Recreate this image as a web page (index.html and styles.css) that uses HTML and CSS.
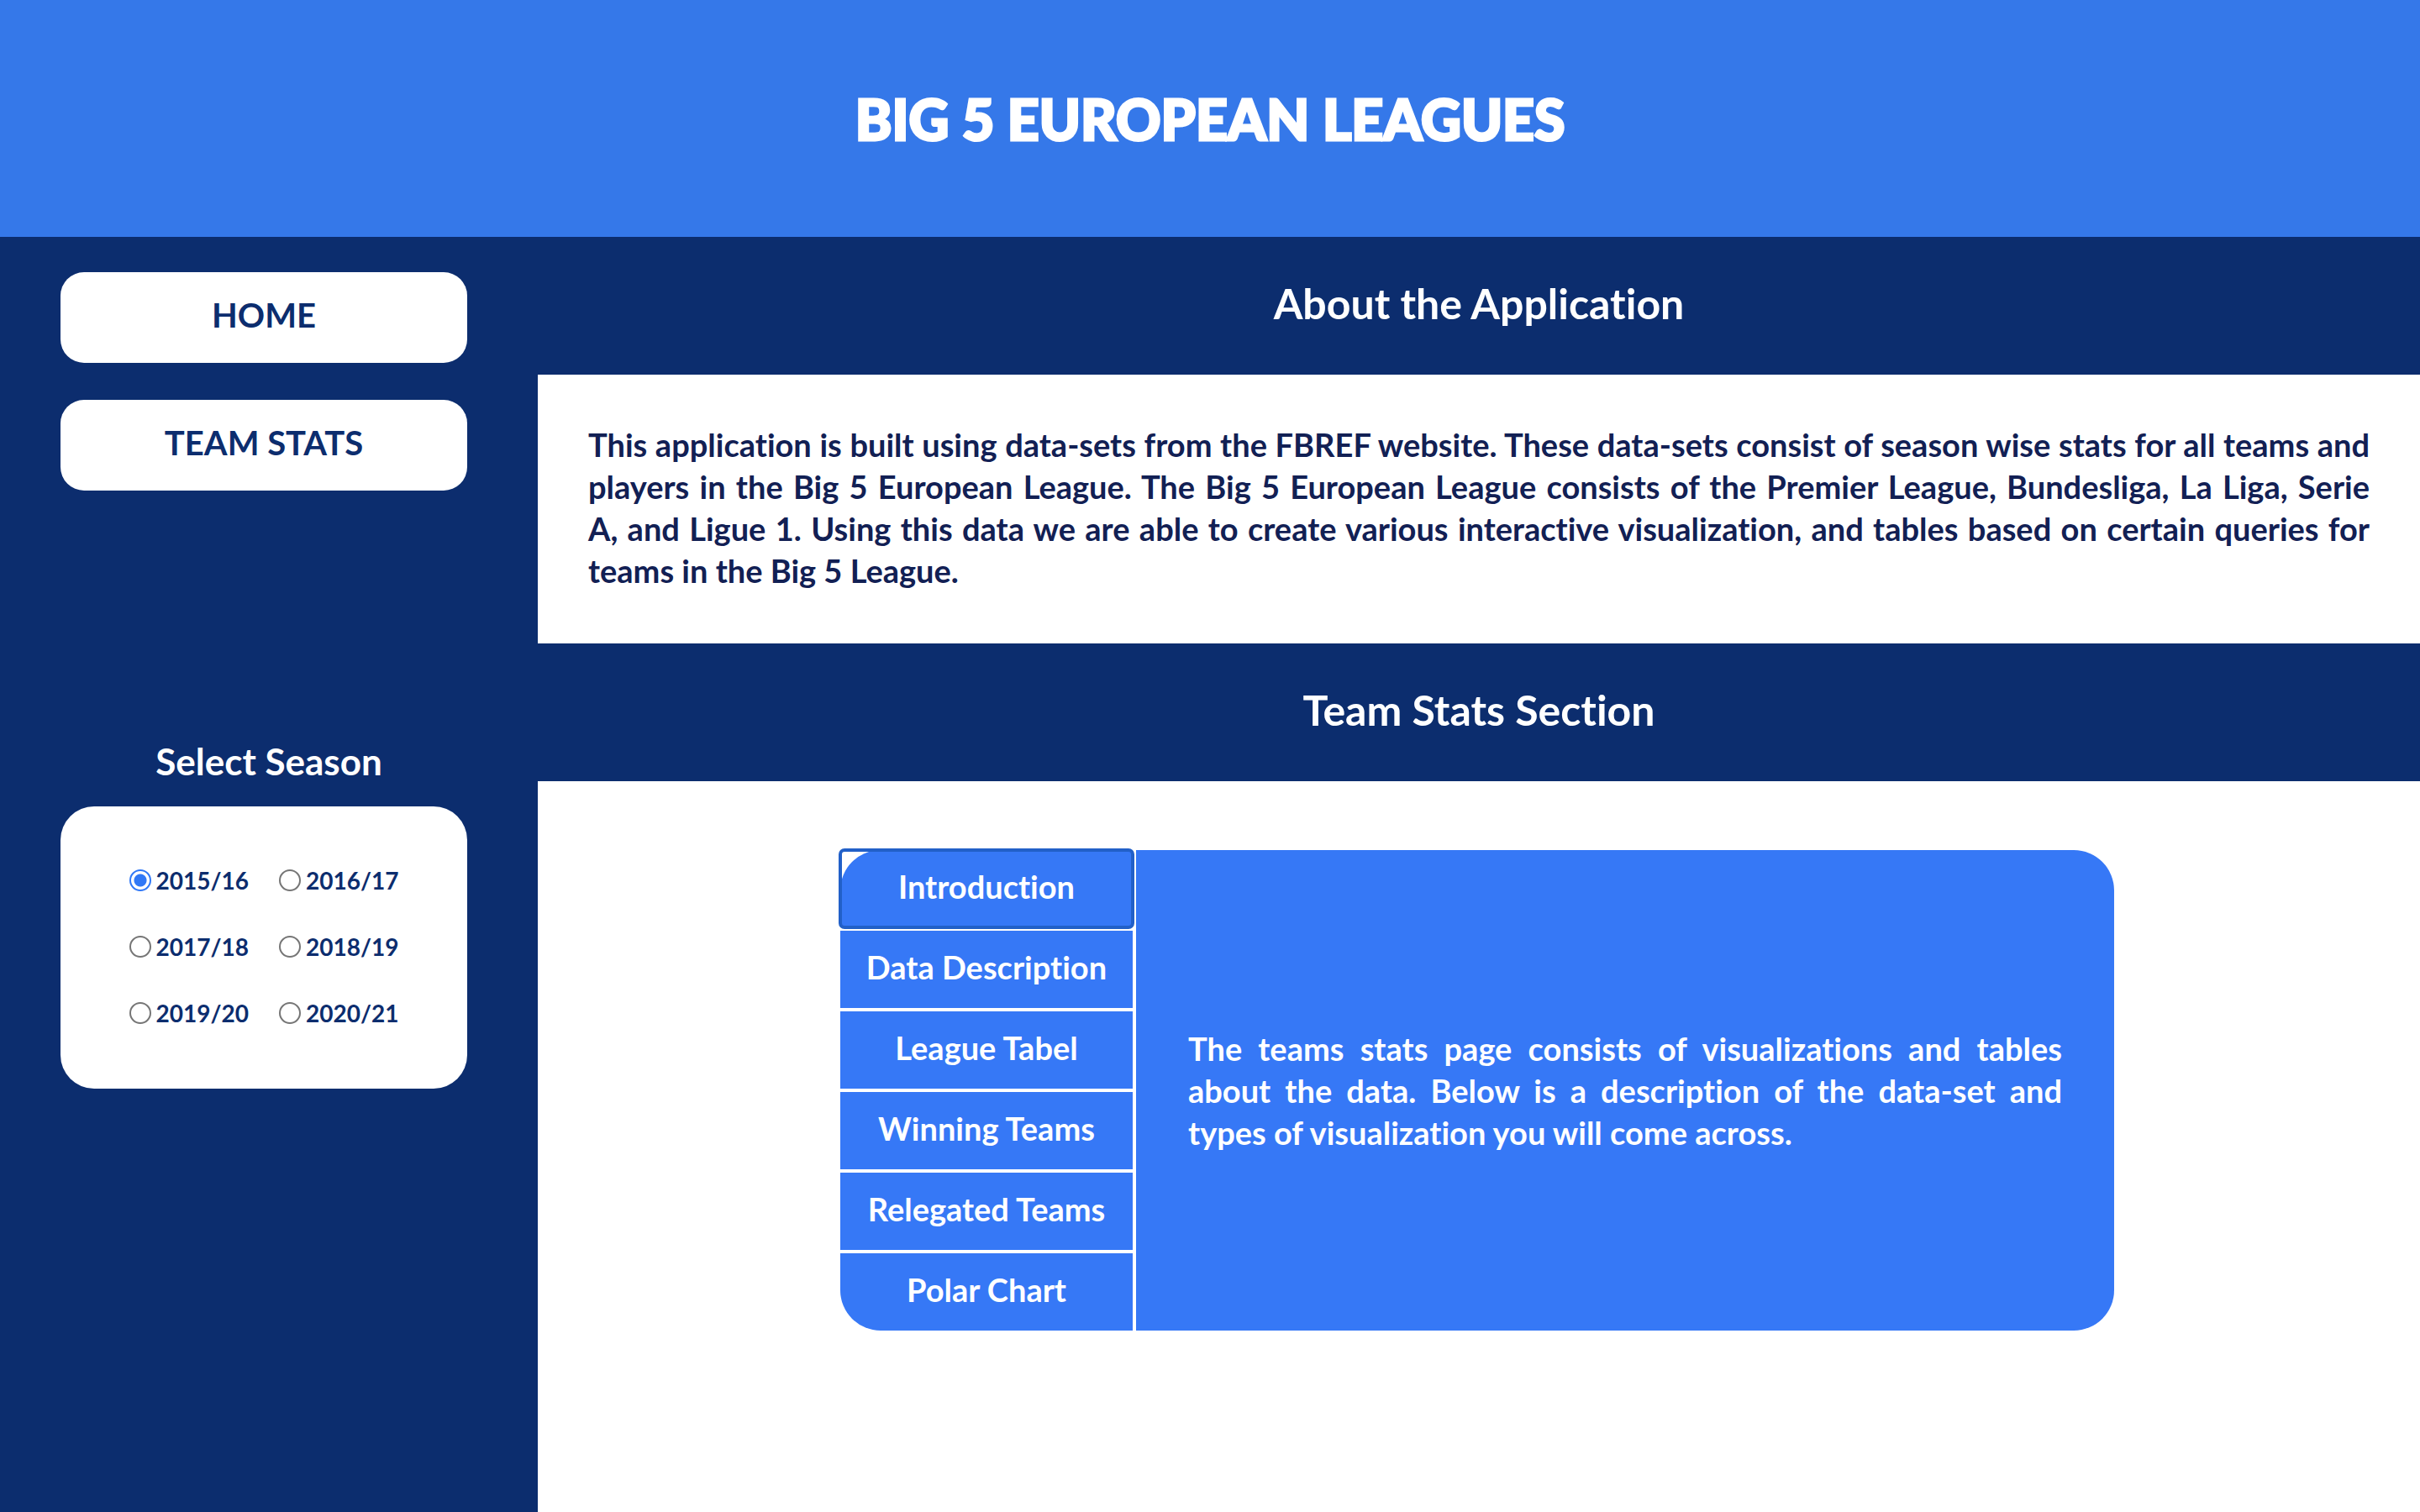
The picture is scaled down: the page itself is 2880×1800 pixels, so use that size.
FILE: index.html
```html
<!DOCTYPE html>
<html lang="en">
<head>
<meta charset="utf-8">
<meta name="viewport" content="width=device-width, initial-scale=1">
<title>Big 5 European Leagues</title>
<link rel="stylesheet" href="styles.css">
</head>
<body>
<header class="banner"><h1 class="banner-title">BIG 5 EUROPEAN LEAGUES</h1></header>
<div class="layout">
  <aside class="sidebar">
    <nav class="menu">
      <button type="button" class="menu-button">HOME</button>
      <button type="button" class="menu-button">TEAM STATS</button>
    </nav>
    <section class="season">
      <h2 class="season-title" id="season-title">Select Season</h2>
      <div class="season-card" role="radiogroup" aria-labelledby="season-title">
        <label class="option"><input class="radio" type="radio" name="season" checked>2015/16</label>
        <label class="option"><input class="radio" type="radio" name="season">2016/17</label>
        <label class="option"><input class="radio" type="radio" name="season">2017/18</label>
        <label class="option"><input class="radio" type="radio" name="season">2018/19</label>
        <label class="option"><input class="radio" type="radio" name="season">2019/20</label>
        <label class="option"><input class="radio" type="radio" name="season">2020/21</label>
      </div>
    </section>
  </aside>
  <main class="content">
    <h2 class="section-title">About the Application</h2>
    <p class="about">This application is built using data-sets from the FBREF website. These data-sets consist of season wise stats for all teams and players in the Big 5 European League. The Big 5 European League consists of the Premier League, Bundesliga, La Liga, Serie A,&nbsp;and Ligue 1. Using this data we are able to create various interactive visualization, and tables based on certain queries for teams in the Big 5 League.</p>
    <h2 class="section-title">Team Stats Section</h2>
    <div class="stats">
      <div class="tabs">
        <div class="tab-list" role="tablist">
          <button type="button" role="tab" class="tab tab-active" aria-selected="true">Introduction</button>
          <button type="button" role="tab" class="tab">Data Description</button>
          <button type="button" role="tab" class="tab">League Tabel</button>
          <button type="button" role="tab" class="tab">Winning Teams</button>
          <button type="button" role="tab" class="tab">Relegated Teams</button>
          <button type="button" role="tab" class="tab">Polar Chart</button>
        </div>
        <div class="tab-panel" role="tabpanel">
          <p class="tab-text">The teams stats page consists of visualizations and tables about the data. Below is a description of the data-set and types of visualization you will come across.</p>
        </div>
      </div>
    </div>
  </main>
</div>
</body>
</html>
```
FILE: styles.css
```css
* { box-sizing: border-box; margin: 0; }

body {
  display: flex;
  flex-direction: column;
  min-height: 100vh;
  background: #fff;
  font-family: Lato, "Open Sans", sans-serif;
  font-weight: 700;
  font-variant-ligatures: none;
}

.banner {
  padding: 100px 0 98px;
  background: #3578e9;
  color: #fff;
  text-align: center;
}
.banner-title {
  font-size: 66px;
  font-weight: 900;
  line-height: 84px;
  -webkit-text-stroke: 3px #fff;
}

.layout { display: flex; flex: 1; }

.sidebar {
  flex: 0 0 640px;
  padding: 42px 84px 42px 72px;
  background: #0c2d6e;
}
.menu { display: flex; flex-direction: column; gap: 44px; }
.menu-button {
  height: 108px;
  padding: 0 0 6px;
  border: 0;
  border-radius: 28px;
  background: #fff;
  color: #0c2d6e;
  font: inherit;
  font-size: 40px;
}

.season { margin-top: 292px; }
.season-title {
  padding-left: 12px;
  color: #fff;
  font-size: 44px;
  font-weight: 700;
  line-height: 60px;
  text-align: center;
}
.season-card {
  display: grid;
  grid-template-columns: auto auto;
  justify-content: center;
  gap: 43px 36px;
  margin-top: 24px;
  padding: 70px 0 72px;
  border-radius: 40px;
  background: #fff;
}
.option {
  display: flex;
  align-items: center;
  gap: 6px;
  height: 36px;
  color: #0c2d6e;
  font-size: 28px;
  line-height: 36px;
}
.radio {
  appearance: none;
  width: 26px;
  height: 26px;
  margin: 0;
  border: 2px solid #767676;
  border-radius: 50%;
  background: #fff;
}
.radio:checked {
  border-color: #3078f6;
  background: radial-gradient(circle, #3078f6 7px, #fff 8px);
}

.content { flex: 1; min-width: 0; }
.section-title {
  padding: 49px 0 55px;
  background: #0c2d6e;
  color: #fff;
  font-size: 50px;
  font-weight: 700;
  line-height: 60px;
  text-align: center;
}
.about {
  padding: 58px 60px 62px;
  color: #122054;
  font-size: 38px;
  line-height: 50px;
  text-align: justify;
}

.stats { padding: 82px 364px 82px 360px; }
.tabs { display: grid; grid-template-columns: 348px 1fr; gap: 4px; }
.tab-list { display: grid; gap: 4px; }
.tab {
  height: 92px;
  padding: 0 0 6px;
  border: 0;
  background: #3678f6;
  color: #fff;
  font: inherit;
  font-size: 38px;
}
.tab:first-child { border-top-left-radius: 48px; }
.tab:last-child { border-bottom-left-radius: 48px; }
/* The highlight keeps near-square corners around the rounded tab. */
.tab-active { position: relative; }
.tab-active::after {
  content: "";
  position: absolute;
  inset: -2px;
  border: 4px solid #2260c8;
  border-radius: 7px;
}
.tab-panel {
  display: flex;
  align-items: center;
  padding: 0 62px;
  border-radius: 0 48px 48px 0;
  background: #3678f6;
}
.tab-text {
  color: #fff;
  font-size: 38px;
  line-height: 50px;
  text-align: justify;
}
```
